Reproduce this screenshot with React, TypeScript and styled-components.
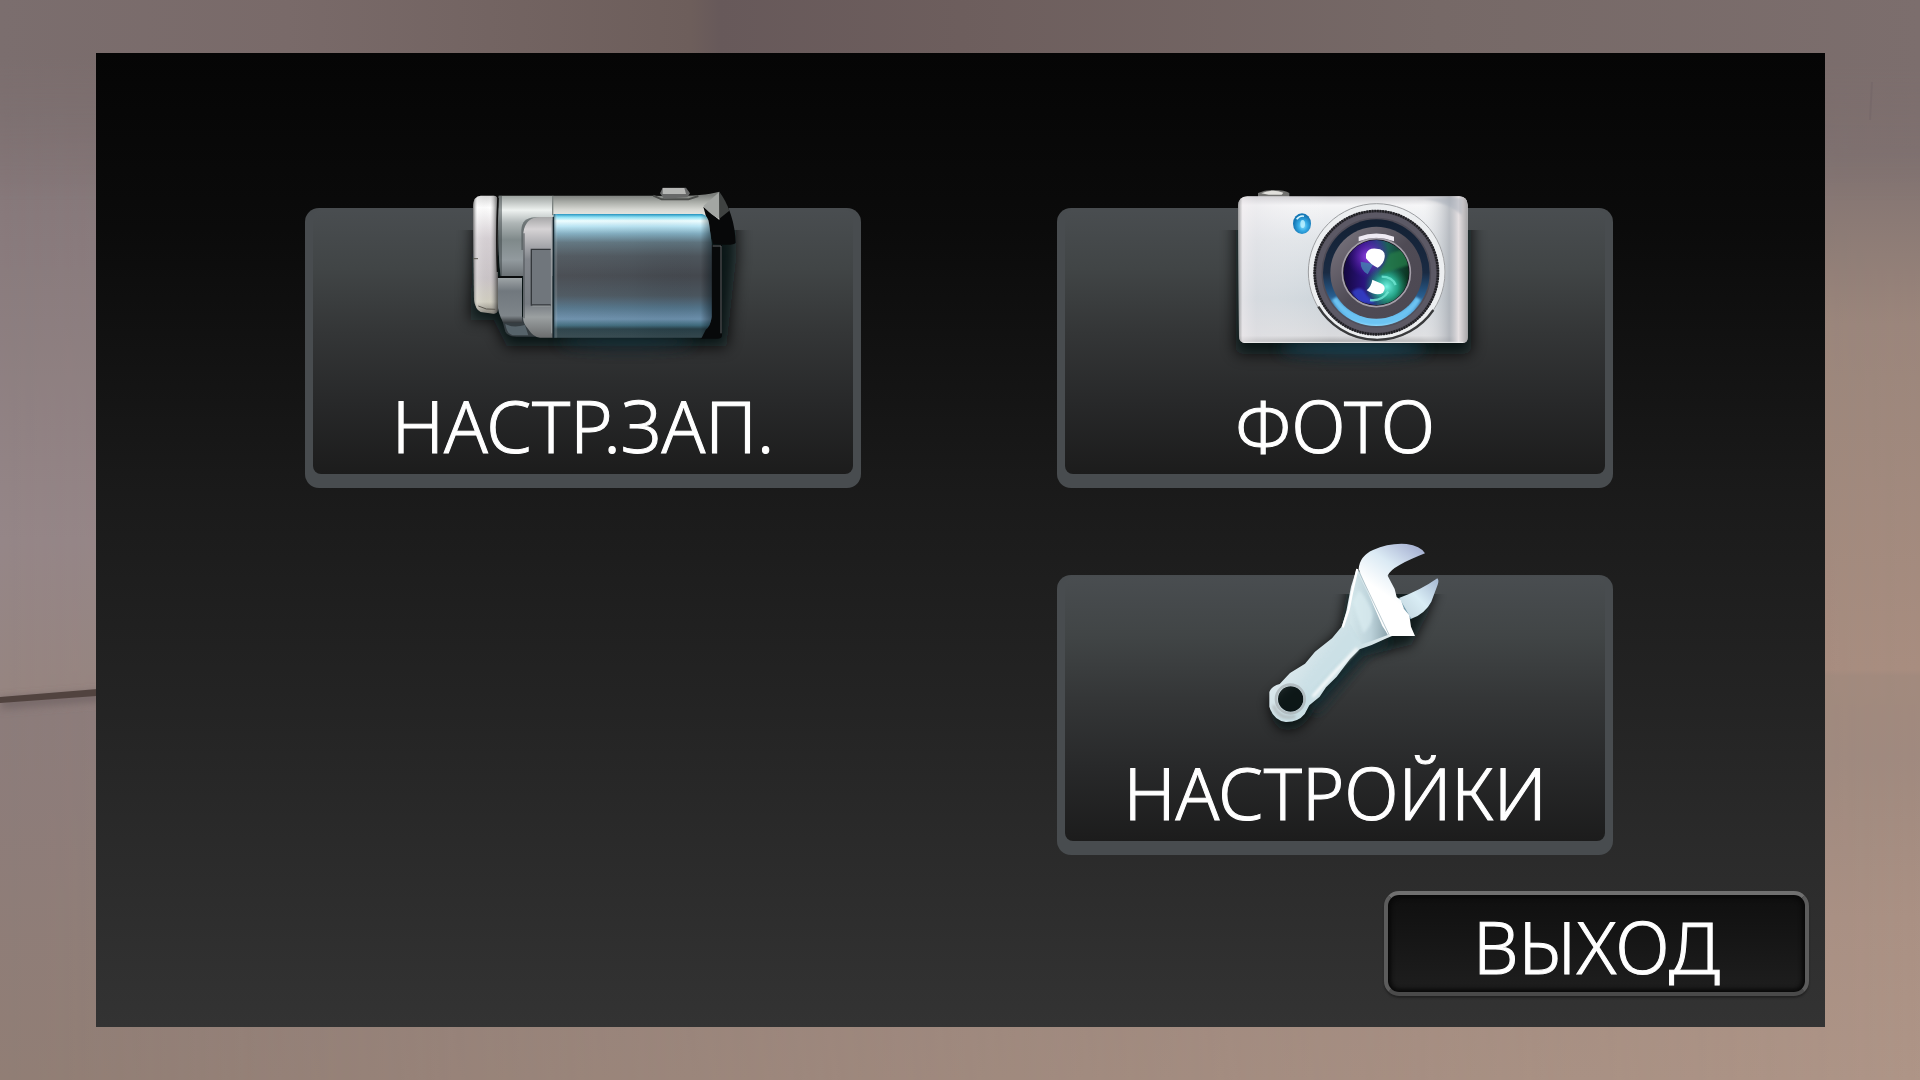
import React from "react";
import styled, { createGlobalStyle } from "styled-components";

const GlobalStyle = createGlobalStyle`
  *, *::before, *::after { box-sizing: border-box; }
  body { margin: 0; background: #86777a; }
`;

const Page = styled.div`
  position: relative;
  display: flex;
  min-height: 100vh;
  padding: 53px 95px 53px 96px;
  overflow: hidden;
  font-family: "Noto Sans", "Open Sans", sans-serif;
`;

const SceneArt = styled.svg`
  position: absolute;
  inset: 0;
  width: 100%;
  height: 100%;
`;

const Panel = styled.main`
  position: relative;
  flex: 1;
  display: flex;
  flex-direction: column;
  justify-content: space-between;
  gap: 36px;
  padding: 155px 16px 31px;
  background: linear-gradient(#050505, #0b0b0b 18%, #1a1a1a 45%, #252525 70%, #333333);
`;

const MenuGrid = styled.nav`
  display: grid;
  grid-template-columns: repeat(2, minmax(0, 1fr));
  gap: 87px 196px;
  padding: 0 196px 0 193px;
`;

const Tile = styled.button<{ $column: number }>`
  position: relative;
  grid-column: ${(p) => p.$column};
  display: flex;
  height: 280px;
  padding: 2px 8px 14px;
  border: 0;
  border-radius: 14px;
  background: #484c4f;
  color: #fff;
  font-family: inherit;
  cursor: pointer;
`;

const TileFace = styled.span`
  flex: 1;
  align-self: stretch;
  display: flex;
  align-items: flex-end;
  justify-content: center;
  border-radius: 8px;
  background: linear-gradient(#494d50, #414546 22%, #343637 46%, #28292a 72%, #1c1c1c);
`;

const TileArt = styled.svg`
  position: absolute;
  top: -38px;
  left: 50%;
  width: 320px;
  height: 200px;
  margin-left: -160px;
  overflow: visible;
`;

const Label = styled.span`
  position: relative;
  padding-top: 4px;
  font-size: 72px;
  font-weight: 300;
  line-height: 98px;
  white-space: nowrap;
  -webkit-text-stroke: 1px #fff;
`;

const ExitButton = styled.button`
  align-self: flex-end;
  display: flex;
  align-items: center;
  justify-content: center;
  width: 425px;
  height: 105px;
  padding: 0;
  border: 4px solid;
  border-color: #707070 #5c5c5c #4a4a4a;
  border-radius: 15px;
  background: linear-gradient(#0f0f0f, #1e1e1e);
  box-shadow: inset 0 0 4px 3px #080808, 0 2px 2px #222;
  color: #fff;
  font-family: inherit;
  cursor: pointer;
`;

function Scene() {
  return (
    <SceneArt viewBox="0 0 1920 1080" preserveAspectRatio="none" aria-hidden="true">
      <defs>
        <linearGradient id="wallLeft" x2="0" y2="1">
          <stop offset="0" stopColor="#7c6f70" />
          <stop offset=".2" stopColor="#887a7c" />
          <stop offset=".5" stopColor="#958688" />
          <stop offset=".64" stopColor="#968581" />
          <stop offset=".66" stopColor="#8c7c7b" />
          <stop offset="1" stopColor="#917e75" />
        </linearGradient>
        <linearGradient id="wallRight" x2="0" y2="1">
          <stop offset="0" stopColor="#7c6e6e" />
          <stop offset=".14" stopColor="#807271" />
          <stop offset=".3" stopColor="#9b867b" />
          <stop offset=".62" stopColor="#a88d7f" />
          <stop offset=".626" stopColor="#a28a7d" />
          <stop offset=".7" stopColor="#a08a7f" />
          <stop offset=".85" stopColor="#aa9184" />
          <stop offset="1" stopColor="#ae9587" />
        </linearGradient>
        <linearGradient id="fadeRight">
          <stop offset="0" stopColor="#000" />
          <stop offset="1" stopColor="#fff" />
        </linearGradient>
        <mask id="rightSide">
          <rect width="1920" height="1080" fill="url(#fadeRight)" />
        </mask>
        <linearGradient id="fadeDown" x2="0" y2="1">
          <stop offset="0" stopColor="#fff" />
          <stop offset=".25" stopColor="#fff" />
          <stop offset="1" stopColor="#000" />
        </linearGradient>
        <mask id="topSide">
          <rect width="1920" height="200" fill="url(#fadeDown)" />
        </mask>
        <linearGradient id="ceiling">
          <stop offset="0" stopColor="#7b6e6e" />
          <stop offset=".15" stopColor="#796a69" />
          <stop offset=".36" stopColor="#6d5e5b" />
          <stop offset=".375" stopColor="#67595a" />
          <stop offset=".5" stopColor="#6d5e5d" />
          <stop offset=".75" stopColor="#766967" />
          <stop offset="1" stopColor="#7c6e6d" />
        </linearGradient>
        <filter id="seamBlur" x="-10%" y="-100%" width="120%" height="300%">
          <feGaussianBlur stdDeviation="5" />
        </filter>
      </defs>
      <rect width="1920" height="1080" fill="url(#wallLeft)" />
      <rect width="1920" height="1080" fill="url(#wallRight)" mask="url(#rightSide)" />
      <rect width="1920" height="200" fill="url(#ceiling)" mask="url(#topSide)" />
      <path d="M0 700 110 692V700L0 708Z" fill="#6c5e60" filter="url(#seamBlur)" />
      <path d="M0 697 110 688V695L0 703Z" fill="#51433f" />
      <path d="M1872 82 1870 120" stroke="#6b5e62" strokeWidth="2" opacity=".3" />
    </SceneArt>
  );
}

function CamcorderArt() {
  return (
    <TileArt viewBox="-51 0 960 600" aria-hidden="true">
      <defs>
        <linearGradient id="vcRing" x2="0" y2="1">
          <stop offset="0" stopColor="#d8d8d8" /><stop offset=".1" stopColor="#fff" />
          <stop offset=".36" stopColor="#d6d0d4" /><stop offset=".7" stopColor="#c9c3c6" />
          <stop offset=".9" stopColor="#d0cdbf" /><stop offset="1" stopColor="#85827a" />
        </linearGradient>
        <linearGradient id="vcRingEdge">
          <stop offset="0" stopColor="#333" stopOpacity=".7" /><stop offset=".18" stopColor="#fff" stopOpacity=".2" />
          <stop offset=".7" stopColor="#aaa" stopOpacity="0" /><stop offset="1" stopColor="#282828" stopOpacity=".7" />
        </linearGradient>
        <linearGradient id="vcBody" x2="0" y2="1">
          <stop offset="0" stopColor="#9ca29f" /><stop offset=".18" stopColor="#eef2f0" />
          <stop offset=".34" stopColor="#afb6b6" /><stop offset=".55" stopColor="#7f898a" />
          <stop offset=".8" stopColor="#929a9e" /><stop offset="1" stopColor="#6c7276" />
        </linearGradient>
        <linearGradient id="vcTop" gradientUnits="userSpaceOnUse" x1="0" x2="0" y1="76" y2="138">
          <stop offset="0" stopColor="#7c7f7c" /><stop offset=".3" stopColor="#a6a9a4" />
          <stop offset=".7" stopColor="#d8d9d4" /><stop offset="1" stopColor="#e6e7e2" />
        </linearGradient>
        <linearGradient id="vcHinge" x2="0" y2="1">
          <stop offset="0" stopColor="#a7a7a8" /><stop offset=".1" stopColor="#d6d3d5" />
          <stop offset=".35" stopColor="#81858b" /><stop offset=".72" stopColor="#777c82" />
          <stop offset=".83" stopColor="#9ba0a1" /><stop offset="1" stopColor="#6b6d6e" />
        </linearGradient>
        <linearGradient id="vcScreen" x2="0" y2="1">
          <stop offset="0" stopColor="#1f90bd" /><stop offset=".025" stopColor="#8ae0f5" />
          <stop offset=".055" stopColor="#effeff" /><stop offset=".1" stopColor="#b9e4f3" />
          <stop offset=".16" stopColor="#80abbe" /><stop offset=".23" stopColor="#5e737e" />
          <stop offset=".34" stopColor="#4d555c" /><stop offset=".5" stopColor="#44484e" />
          <stop offset=".66" stopColor="#4a555e" /><stop offset=".76" stopColor="#527389" />
          <stop offset=".85" stopColor="#6b8eaa" /><stop offset=".9" stopColor="#3f6a7c" />
          <stop offset=".93" stopColor="#273e46" /><stop offset="1" stopColor="#34474d" />
        </linearGradient>
        <linearGradient id="vcScreenSide">
          <stop offset="0" stopColor="#102a35" stopOpacity=".7" /><stop offset=".025" stopColor="#fff" stopOpacity=".04" />
          <stop offset=".5" stopColor="#8ca0a8" stopOpacity=".05" /><stop offset=".93" stopColor="#000" stopOpacity="0" />
          <stop offset="1" stopColor="#001018" stopOpacity=".45" />
        </linearGradient>
        <linearGradient id="vcLow" x2="0" y2="1">
          <stop offset="0" stopColor="#a0a6a8" /><stop offset=".3" stopColor="#71787e" /><stop offset=".85" stopColor="#7e858a" /><stop offset="1" stopColor="#363a3d" />
        </linearGradient>
        <filter id="vcBlur" x="-20%" y="-20%" width="140%" height="140%"><feGaussianBlur stdDeviation="22" /></filter>
        <filter id="vcGlow" x="-30%" y="-300%" width="160%" height="700%"><feGaussianBlur stdDeviation="20" /></filter>
        <clipPath id="vcClip"><rect x="-50" y="180" width="1100" height="440" /></clipPath>
      </defs>
      <g clipPath="url(#vcClip)">
        <path d="M100 140H890V260L860 530H200L160 450H90Z" fill="#050708" opacity=".85" filter="url(#vcBlur)" />
        <ellipse cx="560" cy="515" rx="200" ry="22" fill="#1c3b46" opacity=".6" filter="url(#vcGlow)" />
      </g>
      <path d="M184 440 196 485Q202 499 230 500H310V440Z" fill="#353d41" />
      <path d="M196 462Q220 475 255 465L265 496H218Q200 492 196 462Z" fill="#56636a" />
      <path d="M176 77H340V318H182Q172 250 176 77Z" fill="url(#vcBody)" />
      <path d="M176 77H186V318H182Q172 250 176 77Z" fill="#3c4345" opacity=".5" />
      <path d="M244 180Q246 143 285 142H340V240H244Z" fill="#4d5456" opacity=".65" />
      <path d="M173 322H246V458H190Q173 430 173 400Z" fill="url(#vcLow)" />
      <path d="M168 318H246V324H168Z" fill="#0b0c0d" />
      <path d="M122 77H160Q173 77 173 92V418Q173 432 160 431L122 426Q106 420 102 388L99 110Q101 77 122 77Z" fill="url(#vcRing)" />
      <path d="M122 77H160Q173 77 173 92V418Q173 432 160 431L122 426Q106 420 102 388L99 110Q101 77 122 77Z" fill="url(#vcRingEdge)" />
      <path d="M174 84Q168 200 173 306" fill="none" stroke="#121212" strokeWidth="5" />
      <path d="M100 266H114M115 408Q138 421 166 418" stroke="#5c5850" strokeWidth="3" fill="none" />
      <path d="M338 77H640Q775 82 838 65L850 150H338Z" fill="url(#vcTop)" />
      <path d="M338 78V136" stroke="#7d8381" strokeWidth="4" />
      <path d="M640 77 665 88H745L775 78" fill="none" stroke="#4b4d4b" strokeWidth="6" />
      <path d="M668 53H738L750 70 742 82 672 86 660 70Z" fill="#686969" />
      <path d="M668 54H733L738 72H668Z" fill="#b6b7b5" />
      <path d="M838 65Q884 130 887 218 882 226 850 224L820 222 808 176 790 110 838 150Z" fill="#070809" />
      <path d="M790 108 838 66 838 146Q815 138 790 108Z" fill="#a3a6a3" />
      <path d="M838 65Q858 92 868 122L838 146Z" fill="#3f4241" />
      <path d="M808 225H846V498Q844 507 830 506H782L810 455Z" fill="#07090a" />
      <path d="M818 228H843V490" fill="none" stroke="#606467" strokeWidth="3" />
      <path d="M250 188Q256 142 301 141H338V503H300Q280 502 265 478 250 461 249 445Z" fill="url(#vcHinge)" />
      <path d="M252 190V445" stroke="#4b5054" strokeWidth="4" opacity=".7" />
      <path d="M332 238H274V405H332" fill="#70767c" stroke="#34383c" strokeWidth="4" />
      <path d="M277 408H331M335 150V490" stroke="#a8acae" strokeWidth="2" fill="none" />
      <path d="M341 132H786Q803 135 807 160L815 220V440Q812 468 797 479L785 503H341Z" fill="url(#vcScreen)" />
      <path d="M341 132H786Q803 135 807 160L815 220V440Q812 468 797 479L785 503H341Z" fill="url(#vcScreenSide)" />
      <path d="M340 140V503" stroke="#16262e" strokeWidth="4" />
    </TileArt>
  );
}

function PhotoCameraArt() {
  return (
    <TileArt viewBox="-105 0 960 600" aria-hidden="true">
      <defs>
        <linearGradient id="pcBody" x2="0" y2="1">
          <stop offset="0" stopColor="#c9c8cc" /><stop offset=".06" stopColor="#f4f4f6" />
          <stop offset=".3" stopColor="#dfe3e7" /><stop offset=".7" stopColor="#cbd3d9" />
          <stop offset=".95" stopColor="#d9dadd" /><stop offset="1" stopColor="#a7a7a9" />
        </linearGradient>
        <linearGradient id="pcSide">
          <stop offset="0" stopColor="#777" stopOpacity=".7" /><stop offset=".02" stopColor="#f2edf0" stopOpacity=".6" />
          <stop offset=".08" stopColor="#e6e4e8" stopOpacity=".4" /><stop offset=".4" stopColor="#fff" stopOpacity="0" />
          <stop offset=".8" stopColor="#fff" stopOpacity=".15" /><stop offset=".92" stopColor="#a4a9b0" stopOpacity=".7" />
          <stop offset=".96" stopColor="#e5e0e2" /><stop offset="1" stopColor="#a7a6a8" />
        </linearGradient>
        <linearGradient id="pcRing" x2="0" y2="1">
          <stop offset="0" stopColor="#132033" /><stop offset=".5" stopColor="#1a2b43" />
          <stop offset=".72" stopColor="#285d8e" /><stop offset=".9" stopColor="#5cb5ea" /><stop offset="1" stopColor="#9be0ff" />
        </linearGradient>
        <linearGradient id="pcInner" x2="1" y2="1">
          <stop offset="0" stopColor="#7f7a83" /><stop offset=".5" stopColor="#4f4b55" /><stop offset="1" stopColor="#4c4852" />
        </linearGradient>
        <linearGradient id="pcGlass">
          <stop offset="0" stopColor="#13083e" /><stop offset=".3" stopColor="#2a137c" />
          <stop offset=".52" stopColor="#26457d" /><stop offset=".68" stopColor="#1c6157" /><stop offset="1" stopColor="#0a311d" />
        </linearGradient>
        <radialGradient id="pcViolet"><stop offset="0" stopColor="#9747e8" /><stop offset="1" stopColor="#5010a8" stopOpacity="0" /></radialGradient>
        <radialGradient id="pcCyan"><stop offset="0" stopColor="#75f4e4" /><stop offset=".5" stopColor="#2bbf9f" stopOpacity=".75" /><stop offset="1" stopColor="#178253" stopOpacity="0" /></radialGradient>
        <radialGradient id="pcLed" cx=".55" cy=".6"><stop offset="0" stopColor="#8de3ff" /><stop offset=".5" stopColor="#36abe5" /><stop offset="1" stopColor="#1678b6" /></radialGradient>
        <filter id="pcBlur" x="-20%" y="-20%" width="140%" height="140%"><feGaussianBlur stdDeviation="22" /></filter>
        <filter id="pcGlow" x="-30%" y="-300%" width="160%" height="700%"><feGaussianBlur stdDeviation="20" /></filter>
        <filter id="pcSoft" x="-30%" y="-30%" width="160%" height="160%"><feGaussianBlur stdDeviation="3" /></filter>
        <clipPath id="pcClip"><rect x="-60" y="180" width="980" height="440" /></clipPath>
        <clipPath id="pcLensClip"><circle cx="499" cy="308" r="98" /></clipPath>
      </defs>
      <g clipPath="url(#pcClip)">
        <rect x="76" y="110" width="708" height="442" rx="20" fill="#050708" opacity=".85" filter="url(#pcBlur)" />
        <ellipse cx="430" cy="535" rx="220" ry="24" fill="#1b4a5e" opacity=".75" filter="url(#pcGlow)" />
      </g>
      <path d="M144 82V69Q165 60 190 60 226 60 238 69V82Z" fill="#71716f" />
      <path d="M154 70Q188 55 220 68L215 74H176Z" fill="#e0dfdb" />
      <path d="M84 108Q85 80 112 79H748Q773 80 773 106V503Q773 519 756 519H105Q87 518 87 498Z" fill="url(#pcBody)" />
      <path d="M84 108Q85 80 112 79H748Q773 80 773 106V503Q773 519 756 519H105Q87 518 87 498Z" fill="url(#pcSide)" />
      <path d="M100 517H760" stroke="#eee" strokeWidth="3" />
      <path d="M620 84H756V135Q700 90 620 84Z" fill="#a9b0bb" opacity=".5" filter="url(#pcSoft)" />
      <ellipse cx="276" cy="161" rx="27" ry="31" fill="url(#pcLed)" />
      <path d="M260 148Q270 135 282 139" stroke="#dcf8ff" strokeWidth="5" fill="none" />
      <ellipse cx="278" cy="162" rx="7" ry="12" fill="#b9f0ff" opacity=".85" />
      <circle cx="500" cy="306" r="206" fill="#eceef0" />
      <circle cx="500" cy="306" r="205" fill="none" stroke="#9b9da0" strokeWidth="3" />
      <path d="M325 410A205 205 0 0 0 670 420" fill="none" stroke="#393a3c" strokeWidth="7" />
      <circle cx="499" cy="308" r="188" fill="#4e4b56" />
      <circle cx="499" cy="308" r="185" fill="none" stroke="#202024" strokeWidth="8" strokeDasharray="6 2" />
      <circle cx="499" cy="308" r="172" fill="none" stroke="#5c5965" strokeWidth="15" />
      <circle cx="499" cy="308" r="160" fill="url(#pcRing)" />
      <path d="M373 385A147 147 0 0 0 625 385" fill="none" stroke="#6cc3f2" strokeWidth="18" filter="url(#pcSoft)" />
      <circle cx="499" cy="308" r="138" fill="url(#pcInner)" />
      <path d="M446 214V200Q499 181 552 200V214Q499 194 446 214Z" fill="#eeeaf3" />
      <circle cx="499" cy="308" r="102" fill="#17131f" stroke="#a49fa9" strokeWidth="5" />
      <g clipPath="url(#pcLensClip)">
        <circle cx="499" cy="308" r="98" fill="url(#pcGlass)" />
        <circle cx="475" cy="260" r="65" fill="url(#pcViolet)" />
        <circle cx="530" cy="350" r="66" fill="url(#pcCyan)" />
        <path d="M505 315 540 250 590 235 597 285Z" fill="#267b48" opacity=".75" filter="url(#pcSoft)" />
        <path d="M425 365Q455 340 470 375L495 400H445Z" fill="#3445d0" opacity=".8" filter="url(#pcSoft)" />
        <path d="M452 275Q451 300 473 313L490 282Z" fill="#4282b0" opacity=".8" />
        <path d="M515 320Q547 320 557 345M535 365Q515 395 480 390" stroke="#72e8d4" strokeWidth="7" fill="none" opacity=".8" />
        <path d="M468 252Q475 233 499 236 527 237 524 262 522 282 503 293 484 286 468 265ZM470 361Q484 349 487 329L512 340Q532 350 519 368 501 381 470 361Z" fill="#fff" />
      </g>
    </TileArt>
  );
}

function WrenchArt() {
  return (
    <TileArt viewBox="-195 21 960 600" aria-hidden="true">
      <defs>
        <linearGradient id="wrHandle" x2="1" y2="1">
          <stop offset="0" stopColor="#f7f8fa" /><stop offset=".35" stopColor="#e1ebef" />
          <stop offset=".58" stopColor="#c6dde3" /><stop offset=".8" stopColor="#eff1f2" /><stop offset="1" stopColor="#b9bec1" />
        </linearGradient>
        <linearGradient id="wrJaw" x1=".8" y1="0" x2=".3" y2="1">
          <stop offset="0" stopColor="#a9b4d4" /><stop offset=".3" stopColor="#dbeaf4" /><stop offset=".6" stopColor="#fff" /><stop offset="1" stopColor="#fff" />
        </linearGradient>
        <linearGradient id="wrHook" x1="1" y1="0" x2="0" y2="1">
          <stop offset="0" stopColor="#a5b7d1" /><stop offset=".5" stopColor="#d9edf5" /><stop offset="1" stopColor="#c0d3dc" />
        </linearGradient>
        <linearGradient id="wrNeck">
          <stop offset="0" stopColor="#d3e6ea" /><stop offset=".55" stopColor="#bcd2da" /><stop offset="1" stopColor="#8da5ae" />
        </linearGradient>
        <filter id="wrBlur" x="-30%" y="-30%" width="160%" height="160%"><feGaussianBlur stdDeviation="18" /></filter>
        <filter id="wrSoft" x="-20%" y="-20%" width="140%" height="140%"><feGaussianBlur stdDeviation="4" /></filter>
        <clipPath id="wrClip"><rect x="-60" y="192" width="800" height="500" /></clipPath>
      </defs>
      <g clipPath="url(#wrClip)">
        <path d="M330 120 590 180 560 260 515 345 370 380 230 530Q190 610 130 600 90 590 85 510L300 300Z" fill="#050708" opacity=".75" filter="url(#wrBlur)" />
        <path d="M440 330 370 360 220 540" stroke="#1c3840" strokeWidth="20" fill="none" filter="url(#wrBlur)" />
      </g>
      <path fillRule="evenodd" d="M350 116 362 128 445 300 458 317 440 325 395 345 359 358 330 387 290 440 258 472 239 500 208 526 194 552Q174 577 137 576 100 570 88 530V486Q96 467 119 462L150 429 195 401 225 365 276 325 306 289 319 243 333 170ZM152 469A38 38 0 1 0 152 545 38 38 0 1 0 152 469Z" fill="url(#wrHandle)" />
      <path d="M351 122 443 315 395 333 365 343 330 279 335 210Z" fill="url(#wrNeck)" />
      <path d="M338 215Q355 270 370 310 399 285 397 248 386 213 357 180Z" fill="#dceef2" opacity=".7" filter="url(#wrSoft)" />
      <path d="M330 290Q294 313 275 350L190 452Q203 465 208 485L300 390 360 340Z" fill="#cce1e7" opacity=".8" filter="url(#wrSoft)" />
      <path d="M218 500 285 426 352 355" fill="none" stroke="#fff" strokeWidth="8" filter="url(#wrSoft)" />
      <circle cx="151" cy="507" r="43" fill="none" stroke="#aab2b5" strokeWidth="8" opacity=".75" />
      <path d="M100 526Q117 572 166 559" fill="none" stroke="#a8acae" strokeWidth="9" opacity=".7" filter="url(#wrSoft)" />
      <path d="M477 204Q543 180 592 145 598 151 593 164L574 215Q555 252 512 267L490 234Z" fill="url(#wrHook)" />
      <path d="M476 205 512 267" stroke="#7199aa" strokeWidth="4" />
      <path d="M356 117Q359 78 399 60 448 38 500 42 541 47 555 70 510 88 480 104 449 121 443 137L464 177 470 201 483 211 492 237 508 256 513 290 525 318H447L427 288 403 232Z" fill="url(#wrJaw)" />
      <path d="M354 119 448 316" stroke="#82a0ab" strokeWidth="3" opacity=".55" />
      <path d="M352 117 335 192 326 238 308 292" fill="none" stroke="#fff" strokeWidth="7" />
    </TileArt>
  );
}

const menuItems = [
  { label: "НАСТР.ЗАП.", column: 1, Art: CamcorderArt },
  { label: "ФОТО", column: 2, Art: PhotoCameraArt },
  { label: "НАСТРОЙКИ", column: 2, Art: WrenchArt },
];

export default function App() {
  return (
    <>
      <GlobalStyle />
      <Page>
        <Scene />
        <Panel>
          <MenuGrid>
            {menuItems.map(({ label, column, Art }) => (
              <Tile key={label} type="button" $column={column}>
                <TileFace>
                  <Art />
                  <Label>{label}</Label>
                </TileFace>
              </Tile>
            ))}
          </MenuGrid>
          <ExitButton type="button">
            <Label>ВЫХОД</Label>
          </ExitButton>
        </Panel>
      </Page>
    </>
  );
}
